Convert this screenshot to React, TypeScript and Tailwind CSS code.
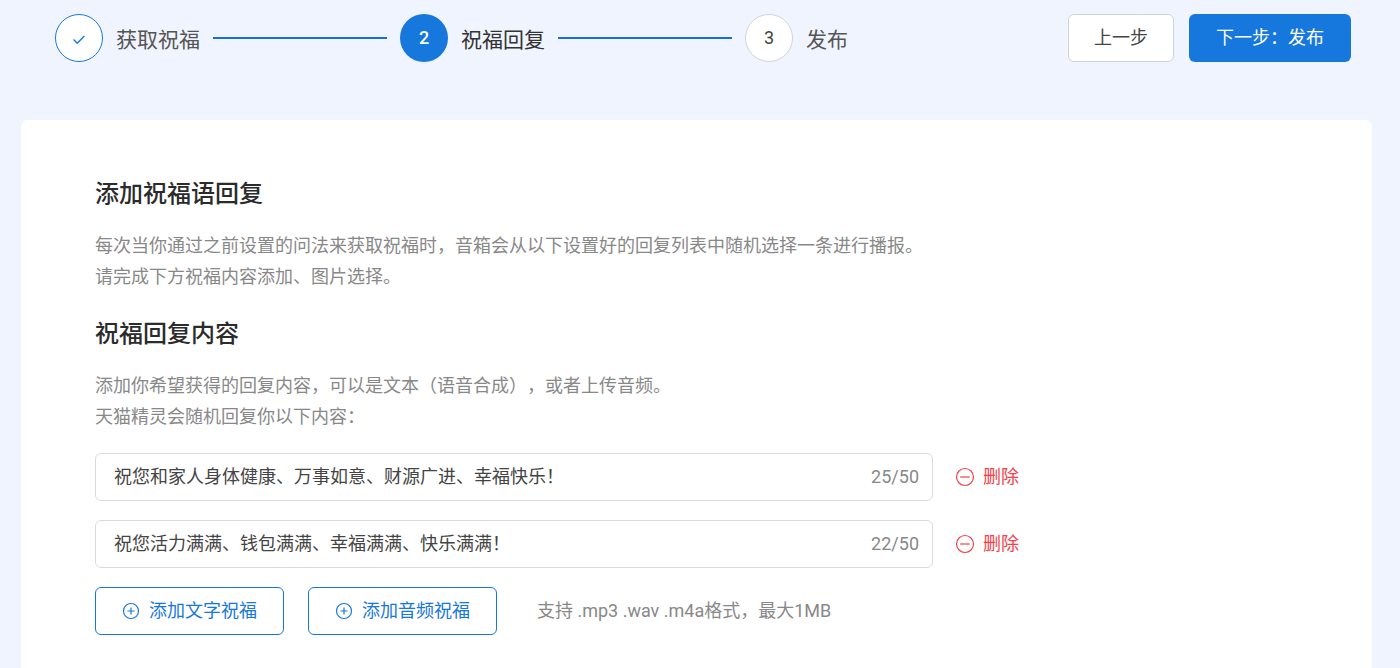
import { useState } from "react";

const MAX = 50;

function CheckIcon() {
  return (
    <svg width="14" height="14" viewBox="0 0 14 14" fill="none" stroke="#1677dd" strokeWidth="1.4" aria-hidden="true">
      <path d="M1.6 6.6 5.2 10.2 12.4 3" />
    </svg>
  );
}

function PlusIcon() {
  return (
    <svg width="18" height="18" viewBox="0 0 18 18" fill="none" stroke="currentColor" strokeWidth="1.2" aria-hidden="true">
      <circle cx="9" cy="9" r="7.5" />
      <path d="M9 5.4v7.2M5.4 9h7.2" />
    </svg>
  );
}

function MinusIcon() {
  return (
    <svg width="20" height="20" viewBox="0 0 20 20" fill="none" stroke="currentColor" strokeWidth="1.2" aria-hidden="true">
      <circle cx="10" cy="10" r="8.5" />
      <path d="M5.2 10h9.6" />
    </svg>
  );
}

function Steps() {
  return (
    <ol className="flex items-center gap-[13px]">
      <li className="flex items-center gap-[13px]">
        <span className="flex size-12 items-center justify-center rounded-full border border-[#1677dd] bg-white pt-1">
          <CheckIcon />
        </span>
        <span className="pt-1 text-[21px] leading-8 text-[#555]">获取祝福</span>
      </li>
      <li aria-hidden="true" className="h-0.5 w-[174px] bg-[#1670cf]"></li>
      <li className="flex items-center gap-[13px]" aria-current="step">
        <span className="flex size-12 items-center justify-center rounded-full bg-[#1677dd] text-lg font-medium text-white">
          2
        </span>
        <span className="pt-1 text-[21px] leading-8 text-[#333]">祝福回复</span>
      </li>
      <li aria-hidden="true" className="h-0.5 w-[174px] bg-[#1670cf]"></li>
      <li className="flex items-center gap-[13px]">
        <span className="flex size-12 items-center justify-center rounded-full border border-[#d0d3d8] bg-white text-lg text-[#444]">
          3
        </span>
        <span className="pt-1 text-[21px] leading-8 text-[#555]">发布</span>
      </li>
    </ol>
  );
}

export default function App() {
  const [replies, setReplies] = useState([
    "祝您和家人身体健康、万事如意、财源广进、幸福快乐！",
    "祝您活力满满、钱包满满、幸福满满、快乐满满！",
  ]);

  const change = (index: number, value: string) => {
    setReplies(replies.map((r, i) => (i === index ? value : r)));
  };

  const remove = (index: number) => {
    setReplies(replies.filter((_, i) => i !== index));
  };

  return (
    <div
      lang="zh-CN"
      className="flex min-h-screen flex-col bg-[#f0f4fe] font-[Roboto,'Noto_Sans_CJK_SC',sans-serif] text-lg [text-spacing-trim:space-all]"
    >
      <header className="flex items-center justify-between pt-3.5 pr-[49px] pl-[55px]">
        <Steps />
        <div className="flex gap-[15px]">
          <button type="button" className="h-12 rounded-md border border-[#d0d3d8] bg-white px-[25px] text-[#444]">
            上一步
          </button>
          <button type="button" className="h-12 rounded-md bg-[#1677dd] px-[27px] text-white">
            下一步：发布
          </button>
        </div>
      </header>

      <main className="mt-[58px] mr-7 ml-[21px] flex-1 rounded-t-md bg-white px-[74px] pt-14 pb-8">
        <h2 className="text-2xl leading-9 font-medium text-[#2b2b2b]">添加祝福语回复</h2>
        <p className="mt-[18px] leading-[31px] text-[#888]">
          每次当你通过之前设置的问法来获取祝福时，音箱会从以下设置好的回复列表中随机选择一条进行播报。
          <br />
          请完成下方祝福内容添加、图片选择。
        </p>

        <h2 className="mt-6 text-2xl leading-9 font-medium text-[#2b2b2b]">祝福回复内容</h2>
        <p className="mt-[18px] leading-[31px] text-[#888]">
          添加你希望获得的回复内容，可以是文本（语音合成），或者上传音频。
          <br />
          天猫精灵会随机回复你以下内容：
        </p>

        <div className="mt-[21px] flex flex-col gap-[19px]">
          {replies.map((reply, index) => (
            <div key={index} className="flex items-center gap-[22px]">
              <label className="flex h-12 w-full max-w-[838px] items-center rounded-md border border-[#d8dbdd] pr-[13px] pl-[18px]">
                <input
                  type="text"
                  aria-label={`祝福回复 ${index + 1}`}
                  value={reply}
                  maxLength={MAX}
                  onChange={(e) => change(index, e.target.value)}
                  className="min-w-0 flex-1 text-[#444] outline-none"
                />
                <span className="text-[#888]">
                  {reply.length}/{MAX}
                </span>
              </label>
              <button
                type="button"
                onClick={() => remove(index)}
                className="flex shrink-0 items-center gap-2 text-[#f0424b]"
              >
                <MinusIcon />
                删除
              </button>
            </div>
          ))}
        </div>

        <div className="mt-[19px] flex items-center">
          <button
            type="button"
            onClick={() => setReplies([...replies, ""])}
            className="flex h-12 items-center gap-[9px] rounded-md border border-[#1677dd] px-[26px] text-[#1677dd]"
          >
            <PlusIcon />
            添加文字祝福
          </button>
          <button
            type="button"
            className="ml-6 flex h-12 items-center gap-[9px] rounded-md border border-[#1677dd] px-[26px] text-[#1677dd]"
          >
            <PlusIcon />
            添加音频祝福
          </button>
          <span className="ml-10 text-[#888]">支持 .mp3 .wav .m4a格式，最大1MB</span>
        </div>
      </main>
    </div>
  );
}
